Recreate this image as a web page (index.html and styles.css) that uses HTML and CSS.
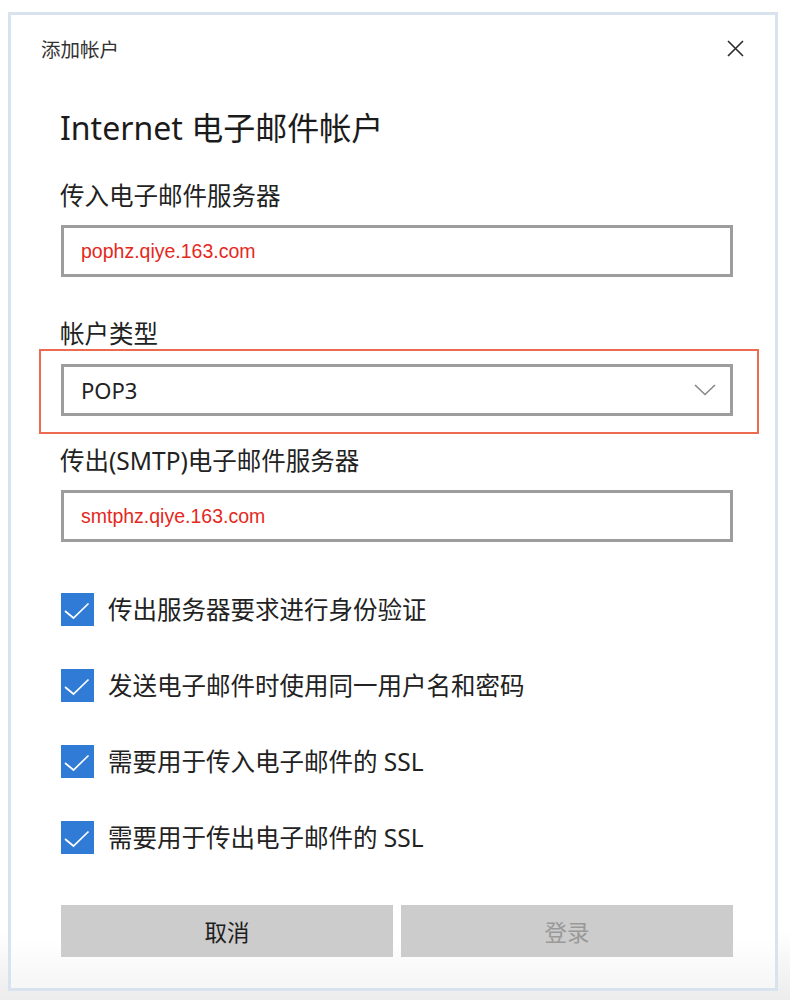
FILE: index.html
```html
<!DOCTYPE html>
<html lang="zh-CN">
<head>
  <meta charset="UTF-8" />
  <meta name="viewport" content="width=device-width, initial-scale=1" />
  <title>添加帐户</title>
  <link rel="stylesheet" href="styles.css">
</head>
<body>
  <div class="page">
    <div class="dialog">
      <div class="titlebar">
        <span class="title">添加帐户</span>
        <button class="close" aria-label="关闭">
          <svg width="17" height="17" viewBox="0 0 17 17"><path d="M1 1L16 16M16 1L1 16" stroke="#2b2b2b" stroke-width="1.6" fill="none"/></svg>
        </button>
      </div>

      <div class="content">
        <h1 class="heading">Internet 电子邮件帐户</h1>

        <label class="label" for="incoming">传入电子邮件服务器</label>
        <input class="field" id="incoming" type="text" value="pophz.qiye.163.com" readonly />

        <label class="label label-type">帐户类型</label>
        <div class="select-wrap">
          <div class="select">
            <span>POP3</span>
            <svg width="22" height="12" viewBox="0 0 22 12"><polyline points="1,1 11,10.5 21,1" stroke="#888" stroke-width="1.6" fill="none"/></svg>
          </div>
          <span class="mark"></span>
        </div>

        <label class="label label-out" for="outgoing">传出(SMTP)电子邮件服务器</label>
        <input class="field" id="outgoing" type="text" value="smtphz.qiye.163.com" readonly />

        <div class="checks">
          <label class="check">
            <span class="box"><svg width="33" height="33" viewBox="0 0 33 33"><polyline points="4,18 12.5,25 27.5,10.5" stroke="#fff" stroke-width="1.7" fill="none"/></svg></span>
            传出服务器要求进行身份验证
          </label>
          <label class="check">
            <span class="box"><svg width="33" height="33" viewBox="0 0 33 33"><polyline points="4,18 12.5,25 27.5,10.5" stroke="#fff" stroke-width="1.7" fill="none"/></svg></span>
            发送电子邮件时使用同一用户名和密码
          </label>
          <label class="check">
            <span class="box"><svg width="33" height="33" viewBox="0 0 33 33"><polyline points="4,18 12.5,25 27.5,10.5" stroke="#fff" stroke-width="1.7" fill="none"/></svg></span>
            需要用于传入电子邮件的 SSL
          </label>
          <label class="check">
            <span class="box"><svg width="33" height="33" viewBox="0 0 33 33"><polyline points="4,18 12.5,25 27.5,10.5" stroke="#fff" stroke-width="1.7" fill="none"/></svg></span>
            需要用于传出电子邮件的 SSL
          </label>
        </div>

        <div class="actions">
          <button class="btn">取消</button>
          <button class="btn btn-disabled" disabled>登录</button>
        </div>
      </div>
    </div>
  </div>
</body>
</html>
```

FILE: styles.css
```css
body { margin: 0; font-family: "Noto Sans", "Noto Sans CJK SC", sans-serif; color: #222; background: linear-gradient(to bottom, #fff 0, #fff 93%, #ececec 100%); min-height: 1000px; }
.page { padding: 12px 0 0 8px; }
.dialog { width: 764px; border: 3px solid #d8e3ed; background: linear-gradient(to bottom, #fff 0, #fff 95%, #f6f6f6 100%); height: 973px; box-sizing: content-box; }
.titlebar { height: 66px; display: flex; align-items: center; justify-content: space-between; padding: 0 31px 0 30px; }
.title { font-size: 19.5px; color: #333; font-family: "Noto Sans CJK SC", sans-serif; }
.close { background: none; border: none; padding: 0; width: 17px; height: 17px; display: flex; cursor: pointer; }
.content { padding: 0 42px 0 49px; }
.heading { font-size: 32px; font-weight: normal; line-height: 40px; margin: 27px 0 0; color: #1b1b1b; }
.label { display: block; font-size: 24.5px; line-height: 32px; margin-top: 32px; color: #222; }
.label-type { margin-top: 41px; }
.label-out { margin-top: 29px; }
.field { display: block; width: 672px; height: 52px; box-sizing: border-box; margin: 13px 0 0 1px; border: 3px solid #9d9d9d; padding: 0 17px; font-family: "Liberation Sans", Arial, sans-serif; font-size: 19.5px; color: #e5281c; outline: none; background: #fff; }
.select-wrap { position: relative; margin: 14px 0 0 1px; width: 672px; }
.select { height: 52px; box-sizing: border-box; border: 3px solid #9d9d9d; display: flex; align-items: center; justify-content: space-between; padding: 0 14px 0 17px; font-size: 22px; color: #222; }
.mark { position: absolute; top: -15px; left: -22px; right: -26px; bottom: -18px; border: 2px solid #ec6a4f; pointer-events: none; }
.checks { display: flex; flex-direction: column; gap: 43px; margin: 51px 0 0 1px; }
.check { display: flex; align-items: center; gap: 14px; font-size: 24.5px; line-height: 33px; color: #222; }
.box { width: 33px; height: 33px; background: #2f7bd6; display: flex; flex-shrink: 0; }
.actions { display: flex; gap: 8px; margin: 51px 0 0 1px; width: 672px; }
.btn { flex: 1; height: 52px; border: none; background: #cccccc; font-family: "Noto Sans CJK SC", sans-serif; font-size: 22.5px; color: #1e1e1e; cursor: pointer; }
.btn-disabled { color: #999; cursor: default; }
```
